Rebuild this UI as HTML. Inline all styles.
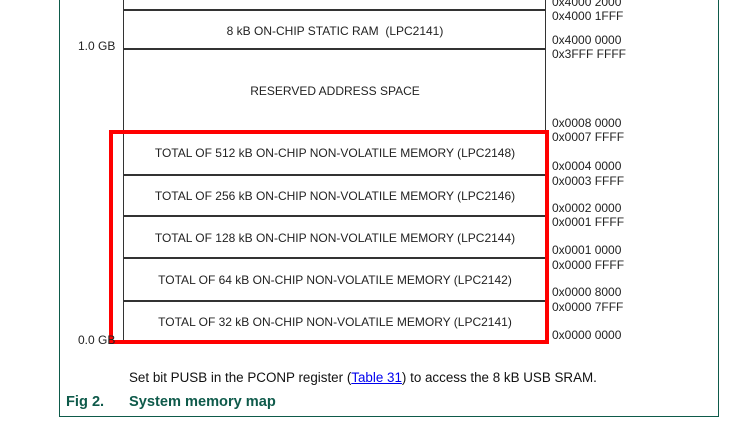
<!DOCTYPE html>
<html><head><style>
body{margin:0;width:747px;height:421px;background:#fff;position:relative;overflow:hidden;font-family:"Liberation Sans",sans-serif;color:#222}
.a{position:absolute;font-size:12px;line-height:14px;white-space:nowrap}
.h{position:absolute;left:124px;width:422px;height:2px;background:#333}
.c{position:absolute;left:124px;width:422px;text-align:center;font-size:12px;line-height:14px;white-space:nowrap}
</style></head><body>
<div style="position:absolute;left:59px;top:-2px;width:658px;height:418px;border:1px solid #0e5a4a;border-top:none"></div>
<div style="position:absolute;left:123px;top:-2px;width:1px;height:344px;background:#333"></div>
<div style="position:absolute;left:545px;top:-2px;width:1px;height:344px;background:#333"></div>
<div class="h" style="top:9px"></div>
<div class="h" style="top:48px"></div>
<div class="h" style="top:174px"></div>
<div class="h" style="top:215px"></div>
<div class="h" style="top:257px"></div>
<div class="h" style="top:300px"></div>
<div class="c" style="top:24px">8 kB ON-CHIP STATIC RAM&nbsp; (LPC2141)</div>
<div class="c" style="top:84px">RESERVED ADDRESS SPACE</div>
<div class="c" style="top:146px">TOTAL OF 512 kB ON-CHIP NON-VOLATILE MEMORY (LPC2148)</div>
<div class="c" style="top:189px">TOTAL OF 256 kB ON-CHIP NON-VOLATILE MEMORY (LPC2146)</div>
<div class="c" style="top:231px">TOTAL OF 128 kB ON-CHIP NON-VOLATILE MEMORY (LPC2144)</div>
<div class="c" style="top:273px">TOTAL OF 64 kB ON-CHIP NON-VOLATILE MEMORY (LPC2142)</div>
<div class="c" style="top:315px">TOTAL OF 32 kB ON-CHIP NON-VOLATILE MEMORY (LPC2141)</div>
<div style="position:absolute;left:109px;top:130px;width:432px;height:206px;border:4px solid #f00"></div>
<div class="a" style="left:78px;top:39px">1.0 GB</div>
<div class="a" style="left:78px;top:333px">0.0 GB</div>
<div class="a" style="left:552px;top:-5px">0x4000 2000</div>
<div class="a" style="left:552px;top:9px">0x4000 1FFF</div>
<div class="a" style="left:552px;top:33px">0x4000 0000</div>
<div class="a" style="left:552px;top:47px">0x3FFF FFFF</div>
<div class="a" style="left:552px;top:116px">0x0008 0000</div>
<div class="a" style="left:552px;top:130px">0x0007 FFFF</div>
<div class="a" style="left:552px;top:159px">0x0004 0000</div>
<div class="a" style="left:552px;top:174px">0x0003 FFFF</div>
<div class="a" style="left:552px;top:201px">0x0002 0000</div>
<div class="a" style="left:552px;top:215px">0x0001 FFFF</div>
<div class="a" style="left:552px;top:243px">0x0001 0000</div>
<div class="a" style="left:552px;top:258px">0x0000 FFFF</div>
<div class="a" style="left:552px;top:285px">0x0000 8000</div>
<div class="a" style="left:552px;top:300px">0x0000 7FFF</div>
<div class="a" style="left:552px;top:328px">0x0000 0000</div>
<div class="a" style="left:129px;top:370px;font-size:13.4px;line-height:16px;color:#111">Set bit PUSB in the PCONP register (<span style="color:#00e;text-decoration:underline">Table 31</span>) to access the 8 kB USB SRAM.</div>
<div class="a" style="left:66px;top:394px;font-size:14.6px;line-height:17px;font-weight:bold;color:#0e5a4a">Fig 2.</div>
<div class="a" style="left:129px;top:394px;font-size:14.6px;line-height:17px;font-weight:bold;color:#0e5a4a">System memory map</div>
</body></html>
